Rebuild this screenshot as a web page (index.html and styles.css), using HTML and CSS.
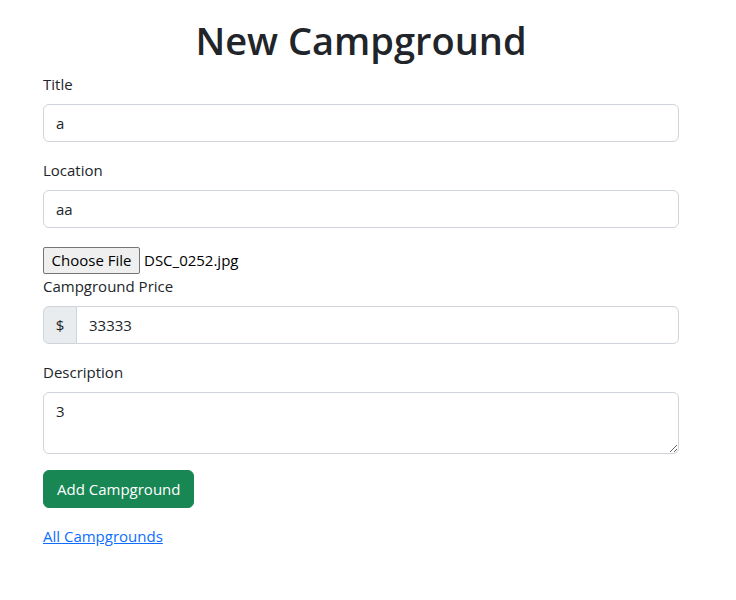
FILE: index.html
```html
<!DOCTYPE html>
<html lang="en">
<head>
<meta charset="utf-8">
<title>New Campground</title>
<link rel="stylesheet" href="styles.css">
</head>
<body>
<main class="page">
  <h1 class="title">New Campground</h1>
  <form class="form">
    <div class="field">
      <label class="label" for="title">Title</label>
      <input class="control" id="title" type="text" value="a">
    </div>
    <div class="field">
      <label class="label" for="location">Location</label>
      <input class="control" id="location" type="text" value="aa">
    </div>
    <div class="file-row">
      <button type="button" class="file-btn">Choose File</button>
      <span class="file-name">DSC_0252.jpg</span>
    </div>
    <div class="field">
      <label class="label" for="price">Campground Price</label>
      <div class="input-group">
        <span class="addon">$</span>
        <input class="control grouped" id="price" type="text" value="33333">
      </div>
    </div>
    <div class="field">
      <label class="label" for="description">Description</label>
      <textarea class="control area" id="description">3</textarea>
    </div>
    <div class="field">
      <button type="button" class="btn-success">Add Campground</button>
    </div>
  </form>
  <a class="link" href="#">All Campgrounds</a>
</main>
</body>
</html>
```

FILE: styles.css
```css
* { box-sizing: border-box; }
body {
  margin: 0;
  font-family: "Open Sans", "Noto Sans", sans-serif;
  font-size: 15px;
  line-height: 24px;
  color: #212529;
  background: #fff;
}
.page {
  width: 636px;
  margin-left: 43px;
  padding-top: 16px;
}
.title {
  margin: 0 0 8px;
  text-align: center;
  font-size: 38px;
  line-height: 48px;
  font-weight: 600;
}
.form { display: flex; flex-direction: column; }
.field { margin-bottom: 16px; display: flex; flex-direction: column; }
.label { display: block; margin-bottom: 8px; height: 24px; }
.control {
  display: block;
  width: 100%;
  height: 38px;
  padding: 6px 12px;
  font: inherit;
  color: #212529;
  border: 1px solid #ced4da;
  border-radius: 6px;
  background: #fff;
  outline: none;
}
.area { height: 62px; resize: vertical; }
.file-row {
  display: flex;
  align-items: center;
  height: 30px;
  padding-top: 2px;
}
.file-btn {
  height: 27px;
  width: 97px;
  padding: 0;
  font: inherit;
  color: #000;
  background: #efefef;
  border: 1px solid #767676;
  border-radius: 2px;
  margin-right: 4px;
}
.file-name { color: #000; }
.input-group { display: flex; height: 38px; }
.addon {
  display: flex;
  align-items: center;
  justify-content: center;
  width: 34px;
  background: #e9ecef;
  border: 1px solid #ced4da;
  border-radius: 6px 0 0 6px;
}
.grouped {
  flex: 1;
  margin-left: -1px;
  border-radius: 0 6px 6px 0;
}
.btn-success {
  align-self: flex-start;
  height: 38px;
  padding: 6px 13px;
  font: inherit;
  color: #fff;
  background: #198754;
  border: 1px solid #198754;
  border-radius: 6px;
}
.link {
  display: inline-block;
  color: #0d6efd;
  text-decoration: underline;
}
```
